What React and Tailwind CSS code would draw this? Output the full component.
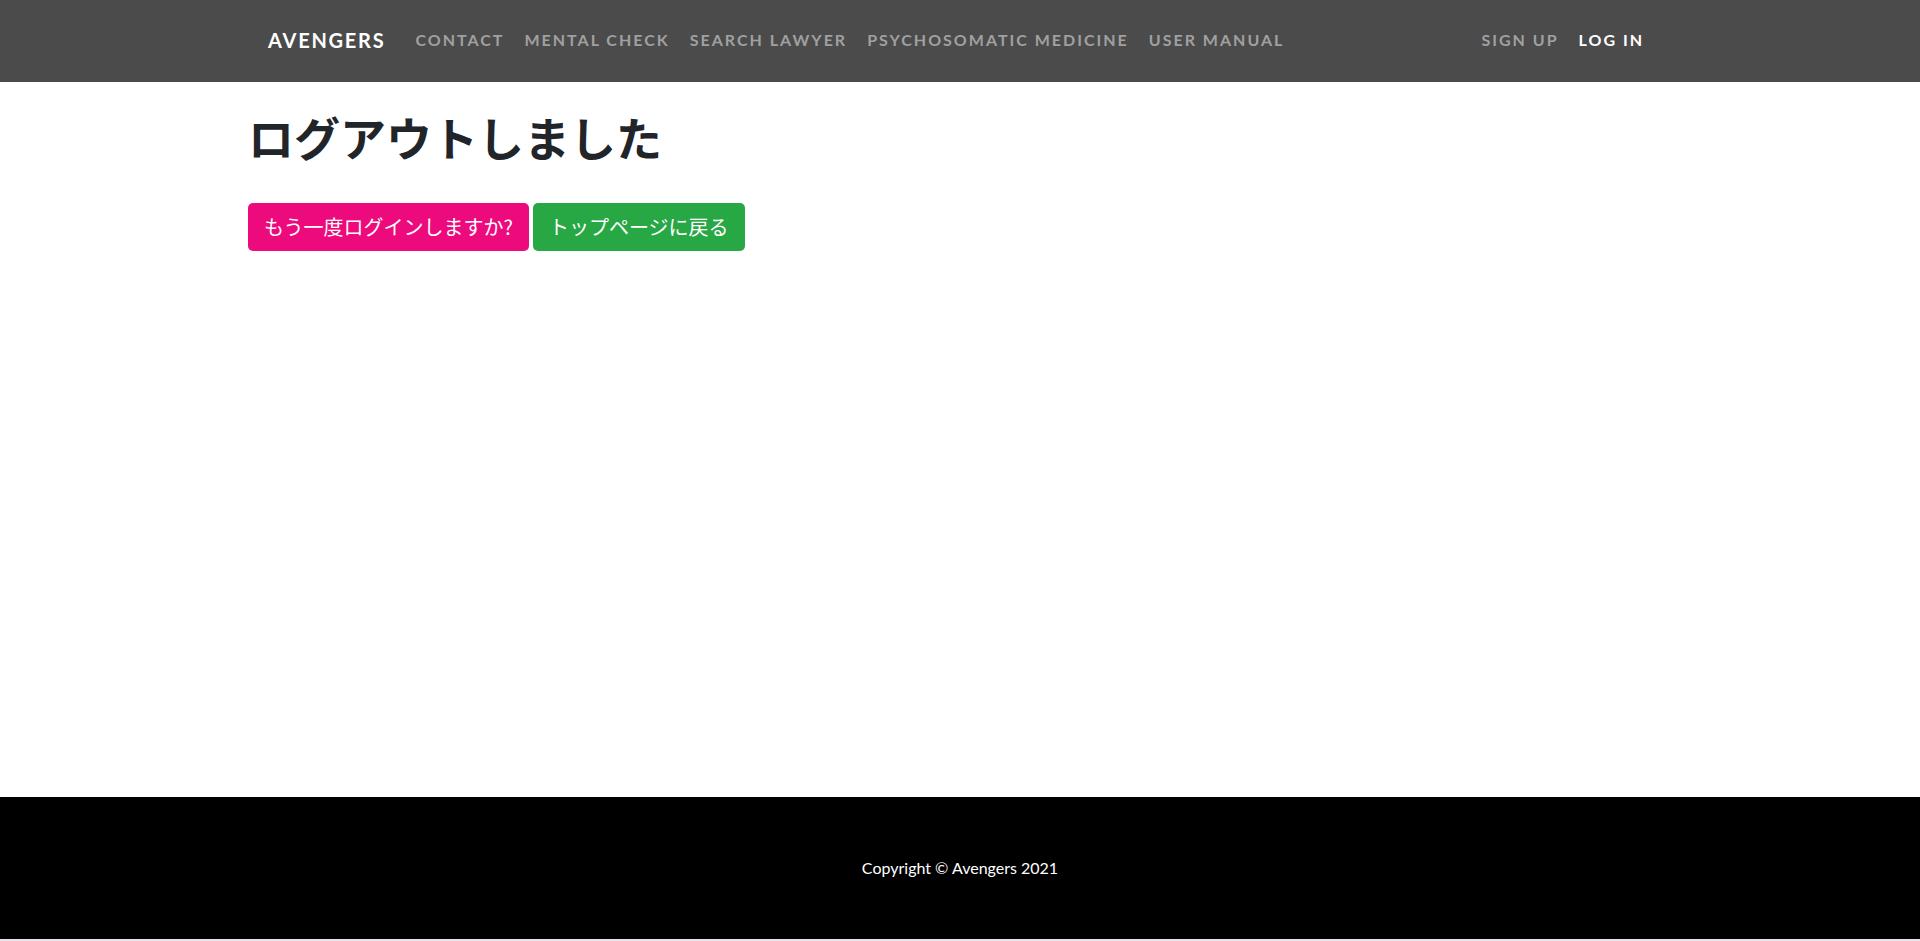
export default function App() {
  const links = ["Contact", "Mental Check", "Search Lawyer", "Psychosomatic Medicine", "User Manual"];
  const jp = { fontFamily: '"Noto Sans CJK JP", "Noto Sans", sans-serif' };

  return (
    <div className="flex h-[941px] flex-col bg-white" style={{ fontFamily: "Lato, sans-serif" }}>
      <nav className="h-[82px] shrink-0 bg-[#4b4b4b]">
        <div className="mx-auto flex h-full w-[1384px] items-center pb-[2px]">
          <a className="mr-[20px] text-[20px] font-bold uppercase tracking-[1.75px] text-white">Avengers</a>
          <ul className="flex items-center">
            {links.map((l) => (
              <li key={l}>
                <a className="px-[10px] text-[16px] font-bold uppercase tracking-[2px] text-[#a0a0a0]">{l}</a>
              </li>
            ))}
          </ul>
          <ul className="ml-auto flex items-center">
            <li>
              <a className="px-[10px] text-[16px] font-bold uppercase tracking-[2px] text-[#a0a0a0]">Sign Up</a>
            </li>
            <li>
              <a className="pl-[10px] pr-[8px] text-[16px] font-bold uppercase tracking-[2px] text-white">Log In</a>
            </li>
          </ul>
        </div>
      </nav>

      <main className="flex-1">
        <div className="mx-auto w-[1424px]" style={jp}>
          <h1 className="mt-[27px] text-[46px] font-bold leading-[1.2] text-[#212529]">ログアウトしました</h1>
          <div className="mt-[39px] flex gap-[4px]">
            <a className="flex h-[48px] items-center rounded-[5px] bg-[#ec0a7d] px-[16px] text-[20px] text-white">
              もう一度ログインしますか?
            </a>
            <a className="flex h-[48px] items-center rounded-[5px] bg-[#28a745] px-[16px] text-[20px] text-white">
              トップページに戻る
            </a>
          </div>
        </div>
      </main>

      <footer className="flex h-[142px] shrink-0 items-center justify-center bg-black">
        <p className="text-[16px] text-white">Copyright © Avengers 2021</p>
      </footer>
      <div className="h-[2px] shrink-0 bg-[#e9e1ea]" />
    </div>
  );
}
